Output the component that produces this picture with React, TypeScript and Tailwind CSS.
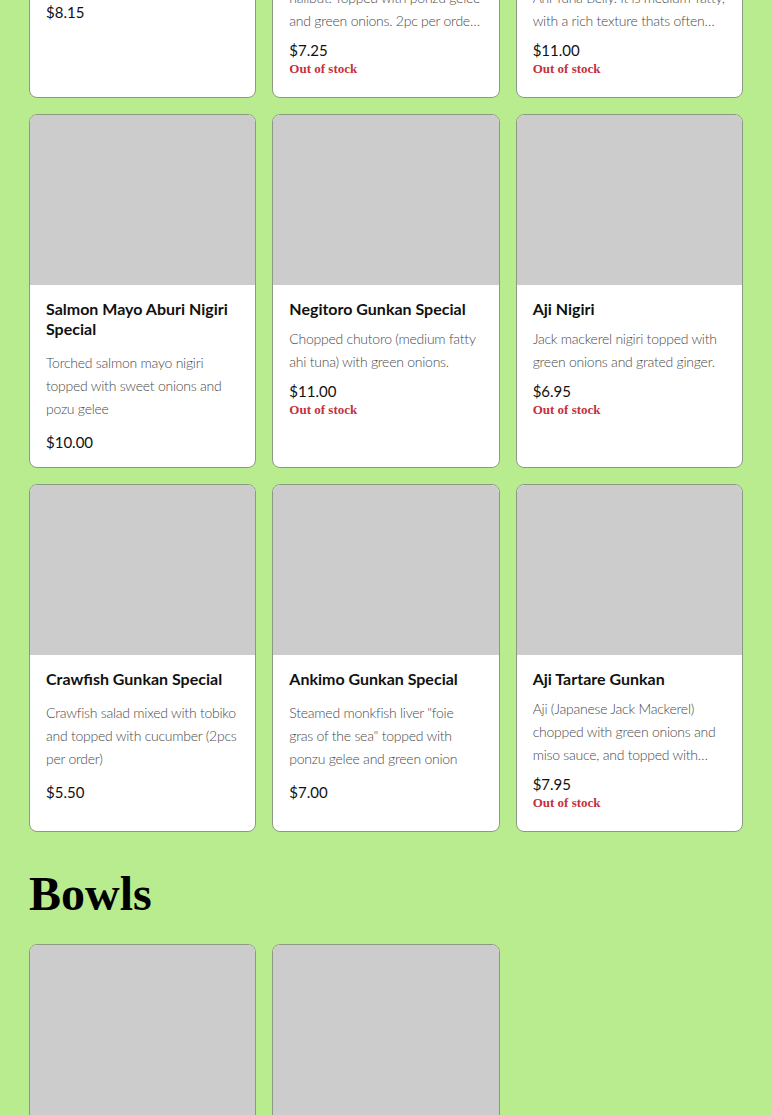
import React from 'react';

type Item = {
  name: string;
  desc: string;
  price: string;
  soldOut?: boolean;
};

const nigiri: Item[] = [
  { name: 'Hotate Nigiri', desc: 'Hokkaido scallop, 2pc per order', price: '$8.15' },
  {
    name: 'Engawa Nigiri',
    desc: 'Engawa is the fin muscle of the halibut. Topped with ponzu gelee and green onions. 2pc per\u00a0order, served with yuzu.',
    price: '$7.25',
    soldOut: true,
  },
  {
    name: 'Toro Nigiri',
    desc: 'Otoro is the fattiest part of the Ahi Tuna Belly. It is medium\u2011fatty, with a rich texture thats often described as buttery.',
    price: '$11.00',
    soldOut: true,
  },
  {
    name: 'Salmon Mayo Aburi Nigiri Special',
    desc: 'Torched salmon mayo nigiri topped with sweet onions and pozu gelee',
    price: '$10.00',
  },
  {
    name: 'Negitoro Gunkan Special',
    desc: 'Chopped chutoro (medium fatty ahi tuna) with green onions.',
    price: '$11.00',
    soldOut: true,
  },
  {
    name: 'Aji Nigiri',
    desc: 'Jack mackerel nigiri topped with green onions and grated ginger.',
    price: '$6.95',
    soldOut: true,
  },
  {
    name: 'Crawfish Gunkan Special',
    desc: 'Crawfish salad mixed with tobiko and topped with cucumber (2pcs per order)',
    price: '$5.50',
  },
  {
    name: 'Ankimo Gunkan Special',
    desc: 'Steamed monkfish liver "foie gras\u00a0of the sea" topped with ponzu gelee and green onion',
    price: '$7.00',
  },
  {
    name: 'Aji Tartare Gunkan',
    desc: 'Aji (Japanese Jack Mackerel) chopped with green onions and miso sauce, and topped with shiso leaf.',
    price: '$7.95',
    soldOut: true,
  },
];

const bowls: Item[] = [
  { name: 'Chirashi Bowl', desc: 'Assorted sashimi over seasoned sushi rice', price: '$24.00' },
  { name: 'Salmon Ikura Bowl', desc: 'Fresh salmon and salmon roe over sushi rice', price: '$19.50' },
];

const MenuCard = ({ item }: { item: Item }) => (
  <div className="flex flex-col rounded-lg border border-[#8c9a84] bg-white overflow-hidden">
    {/* photo placeholder */}
    <div className="h-[170px] bg-[#cccccc] shrink-0" />
    <div className={item.soldOut ? 'flex flex-col px-4 pt-[14px] pb-[19px]' : 'flex flex-col px-4 pt-[14px] pb-[15px]'}>
      <h3 className="text-[16px] leading-5 font-bold text-[#111]">{item.name}</h3>
      <p
        className={
          item.soldOut
            ? 'mt-2 text-[14px] leading-[23px] tracking-[-0.25px] font-light text-[#4a4a4a] line-clamp-3'
            : 'mt-3 text-[14px] leading-[23px] tracking-[-0.25px] font-light text-[#4a4a4a] line-clamp-3'
        }
      >
        {item.desc}
      </p>
      <div className={item.soldOut ? 'mt-2' : 'mt-3'}>
        <div className="text-[15px] leading-5 text-[#111]">{item.price}</div>
        {item.soldOut && (
          <div className="font-['Liberation_Serif',serif] font-bold text-[13px] leading-[18px] text-[#c4323c]">
            Out of stock
          </div>
        )}
      </div>
    </div>
  </div>
);

export default function App() {
  return (
    <div className="min-h-screen bg-[#b8ec8f] px-[29px] overflow-hidden font-['Lato','Open_Sans',sans-serif]">
      {/* list is scrolled: first row sits above the fold */}
      <div className="grid grid-cols-3 gap-4 -mt-[250px]">
        {nigiri.map((item) => (
          <MenuCard key={item.name} item={item} />
        ))}
      </div>

      <h2 className="mt-[34px] mb-[22px] font-['Liberation_Serif',serif] font-bold text-[48px] leading-[56px] text-black">
        Bowls
      </h2>
      <div className="grid grid-cols-3 gap-4 pb-10">
        {bowls.map((item) => (
          <MenuCard key={item.name} item={item} />
        ))}
      </div>
    </div>
  );
}
